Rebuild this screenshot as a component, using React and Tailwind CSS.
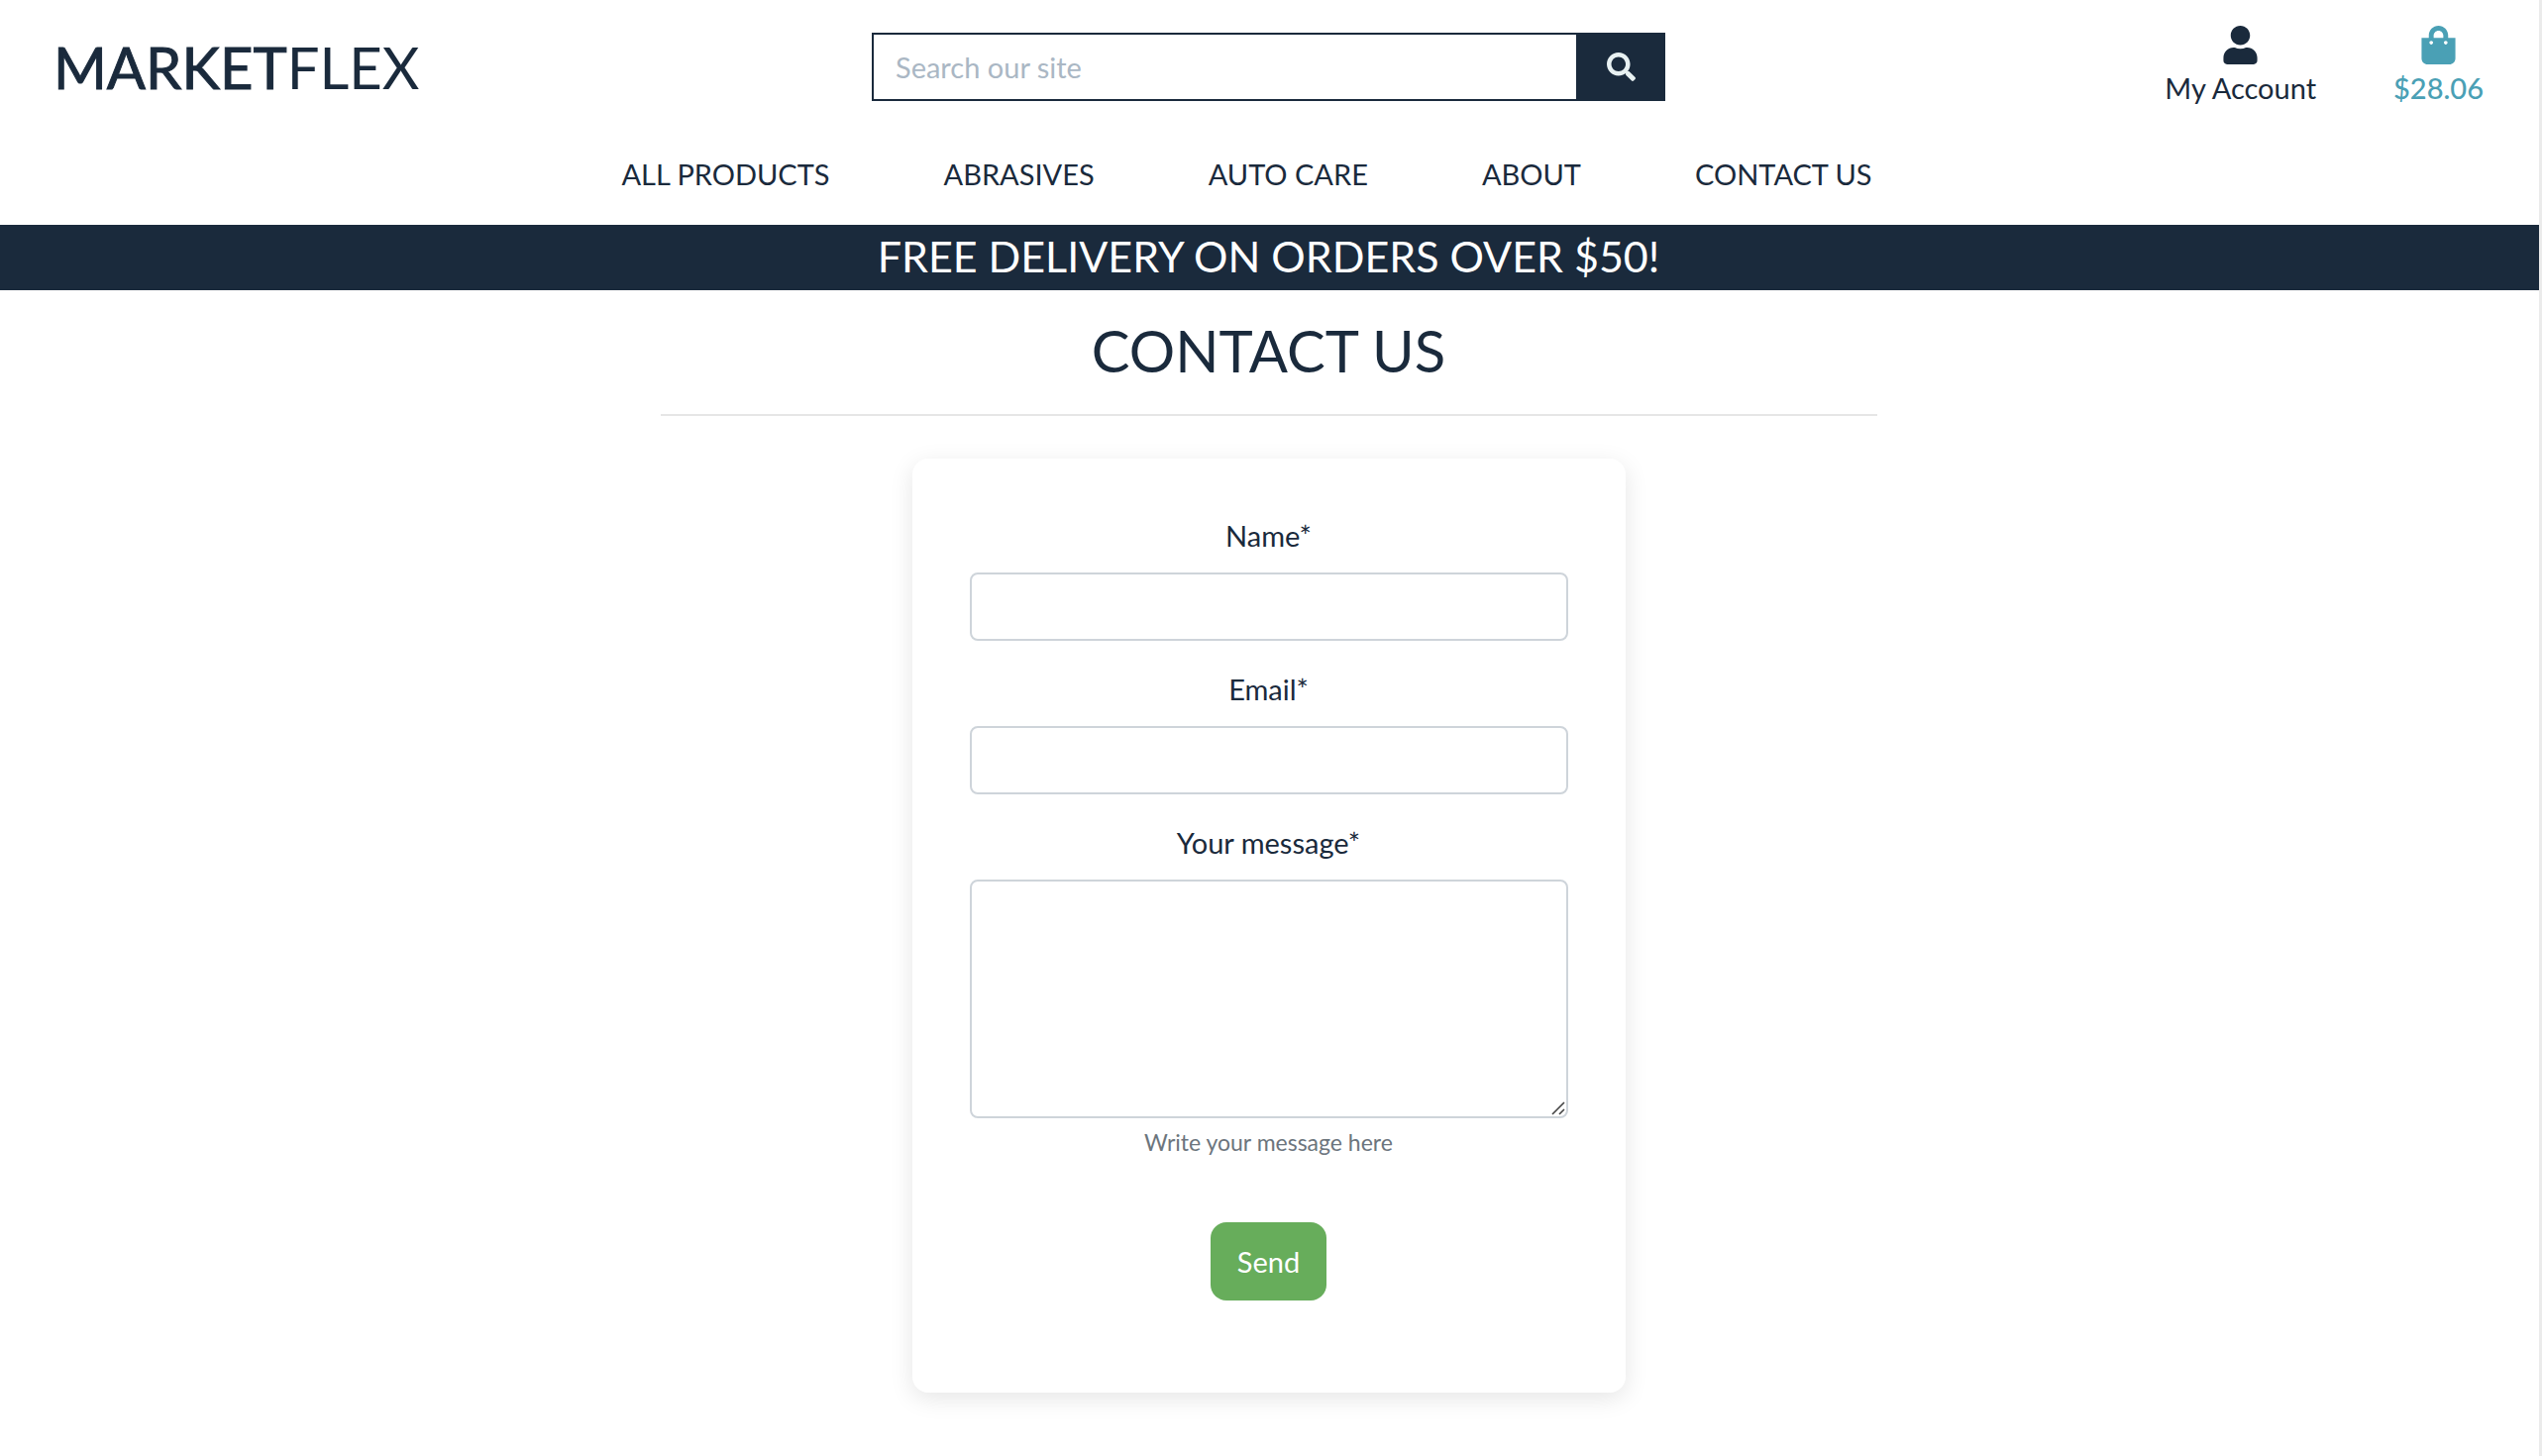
import React from "react";
import { FaUser, FaShoppingBag, FaSearch } from "react-icons/fa";

const links = ["ALL PRODUCTS", "ABRASIVES", "AUTO CARE", "ABOUT", "CONTACT US"];
const fieldClass =
  "block w-full rounded-lg border-2 border-[#ced4da] bg-white px-6 text-[29px] outline-none";

function Field({ id, label, children }) {
  return (
    <div className="mb-[26px]">
      <label htmlFor={id} className="mb-[14px] block text-center text-[29px] leading-[46px]">
        {label}
      </label>
      {children}
    </div>
  );
}

function Header() {
  return (
    <header>
      <div className="grid h-[135px] grid-cols-[1fr_801px_1fr] items-center pl-[54px] pr-[56px]">
        <a href="#" className="text-[58px] leading-[72px]">
          <span className="[-webkit-text-stroke:1px_currentColor]">MARKET</span>FLEX
        </a>
        <form className="flex h-[69px]" onSubmit={(e) => e.preventDefault()}>
          <input
            type="search"
            aria-label="Search our site"
            placeholder="Search our site"
            className="min-w-0 flex-1 border-2 border-r-0 border-[#1a2a3c] px-[22px] text-[29px] outline-none placeholder:text-[#aab7c4]"
          />
          <button
            type="submit"
            aria-label="Search"
            className="flex w-[90px] items-center justify-center bg-[#1a2a3c] text-[#e8f1f2]"
          >
            <FaSearch size={29} />
          </button>
        </form>
        <div className="flex justify-end gap-[78px] pt-1">
          <a href="#" className="flex flex-col items-center">
            <FaUser size={39} />
            <span className="text-[29px] leading-[48px]">My Account</span>
          </a>
          <a href="#" className="flex flex-col items-center text-[#4aa0b5]">
            <FaShoppingBag size={39} />
            <span className="text-[29px] font-medium leading-[48px]">$28.06</span>
          </a>
        </div>
      </div>
      <nav className="flex h-[92px] justify-center gap-[115px] pr-[46px] pt-[18px] text-[29px] leading-[46px]">
        {links.map((l) => (
          <a key={l} href="#">
            {l}
          </a>
        ))}
      </nav>
    </header>
  );
}

export default function App() {
  return (
    <div className="min-h-screen border-r-[3px] border-[#ebebeb] bg-white font-[Lato,sans-serif] text-[#1a2a3c]">
      <Header />
      <div className="bg-[#1a2a3c] pb-[7px] pr-[2px] pt-[5px] text-center text-[43px] leading-[54px] text-white">
        FREE DELIVERY ON ORDERS OVER $50!
      </div>
      <main className="pr-[2px]">
        <div className="mx-auto w-full max-w-[1228px]">
          <h1 className="pb-[29px] pt-[26px] text-center text-[58px] leading-[70px]">CONTACT US</h1>
          <hr className="border-t-2 border-[#e6e6e6]" />
          <form
            onSubmit={(e) => e.preventDefault()}
            className="mx-auto mt-[43px] flex max-w-[720px] flex-col rounded-2xl bg-white px-[58px] pb-[93px] pt-[55px] shadow-[0_6px_24px_rgba(0,0,0,0.1)]"
          >
            <Field id="name" label="Name*">
              <input id="name" type="text" className={fieldClass + " h-[69px]"} />
            </Field>
            <Field id="email" label="Email*">
              <input id="email" type="email" className={fieldClass + " h-[69px]"} />
            </Field>
            <Field id="message" label="Your message*">
              <div className="relative">
                <textarea
                  id="message"
                  aria-describedby="message-hint"
                  className={fieldClass + " h-[241px] resize-none"}
                />
                <svg
                  className="absolute bottom-[3px] right-[3px]"
                  width="14"
                  height="14"
                  viewBox="0 0 14 14"
                  fill="none"
                  stroke="#444"
                  strokeWidth="1.6"
                  aria-hidden="true"
                >
                  <path d="M1 13 13 1M8 13l5-5" />
                </svg>
              </div>
              <p id="message-hint" className="mt-[6px] text-center text-[23px] leading-9 text-[#6c757d]">
                Write your message here
              </p>
            </Field>
            <button
              type="submit"
              className="mt-[37px] h-[79px] self-center rounded-2xl bg-[#67ad5b] px-[27px] text-[29px] text-white"
            >
              Send
            </button>
          </form>
        </div>
      </main>
    </div>
  );
}
